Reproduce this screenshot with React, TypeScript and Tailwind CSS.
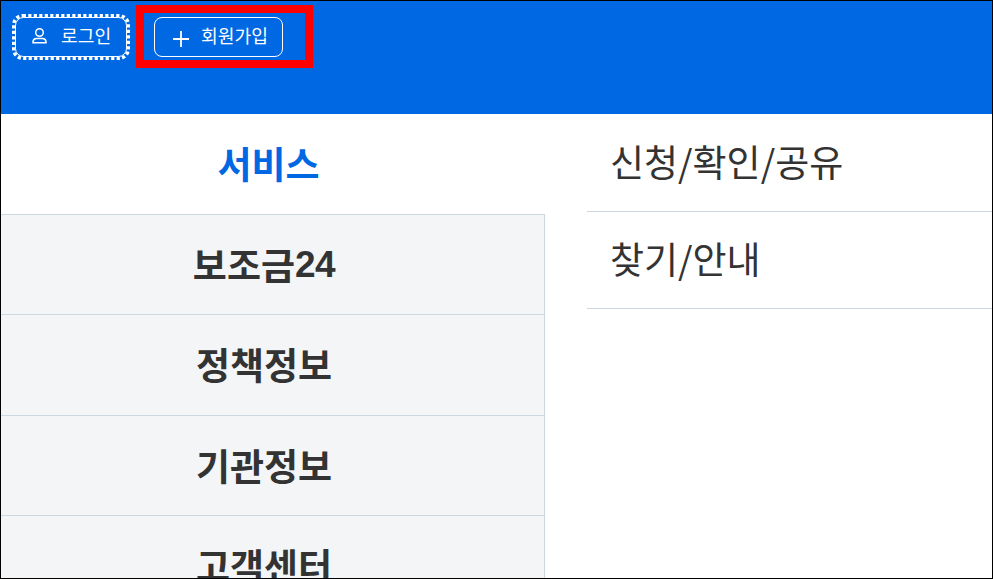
import React from "react";

const font = { fontFamily: '"Noto Sans CJK KR", "Liberation Sans", sans-serif' };

export default function App() {
  const left = ["보조금", "정책정보", "기관정보", "고객센터"];
  const right = ["신청/확인/공유", "찾기/안내"];
  return (
    <div style={font} className="relative h-[579px] w-[993px] overflow-hidden border border-black bg-white text-[#333333]">
      <header className="flex h-[113px] items-start bg-[#0068e3] pl-[12px] pt-[14px] text-white">
        <button className="relative flex h-[44px] w-[116px] items-center pl-[18px] text-[18.200px]">
          <svg className="absolute -left-[1px] -top-[1px]" width="118" height="46" viewBox="0 0 118 46" fill="none" stroke="currentColor">
            <rect x="3.500" y="3.500" width="111" height="39" rx="8" strokeWidth="1" />
            <rect x="1.750" y="1.750" width="114.500" height="42.500" rx="9" strokeWidth="3.500" strokeDasharray="3.200 2.300" />
          </svg>
          <svg className="-mt-[3px]" width="17" height="17" viewBox="0 0 17 17" fill="none" stroke="currentColor" strokeWidth="1.500">
            <circle cx="8.500" cy="5.500" r="3.800" />
            <path d="M2 15.800v-1.200a3.500 3.500 0 0 1 3.500-3.200h6a3.500 3.500 0 0 1 3.500 3.200v1.200z" />
          </svg>
          <span className="ml-[13px] -mt-[2px]">로그인</span>
        </button>
        <button className="ml-[25px] mt-[2px] flex h-[40px] w-[129px] items-center rounded-[8px] border border-white pl-[17px] text-[18.200px]">
          <svg className="mt-[4px]" width="18" height="18" viewBox="0 0 18 18" fill="none" stroke="currentColor" strokeWidth="1.800">
            <path d="M9 1v16M1 9h16" />
          </svg>
          <span className="ml-[11px] -mt-[3px]">회원가입</span>
        </button>
      </header>
      <div className="flex">
        <div className="w-[544px]">
          <div className="flex h-[100px] items-center justify-center pb-[2px] pr-[9px] text-[37px] font-bold leading-none text-[#0068e3]">서비스</div>
          <ul className="border-t border-r border-[#ccd8e0] bg-[#f3f5f7]">
            {left.map((t, i) => (
              <li key={t} className="flex h-[100.330px] items-center justify-center border-b border-[#ccd8e0] pr-[17px] text-[37px] font-bold">
                {t}
                {i === 0 && <span className="font-['Liberation_Sans'] tracking-[-0.500px]">24</span>}
              </li>
            ))}
          </ul>
        </div>
        <ul className="ml-[42px] flex-1">
          {right.map((t) => (
            <li key={t} className="flex h-[97.500px] items-center border-b border-[#ccd8e0] pb-[2px] pl-[23px] text-[37px]">{t}</li>
          ))}
        </ul>
      </div>
      <div className="absolute left-[135px] top-[4px] h-[63px] w-[177px] border-[8px] border-[#ff0000]" />
    </div>
  );
}
